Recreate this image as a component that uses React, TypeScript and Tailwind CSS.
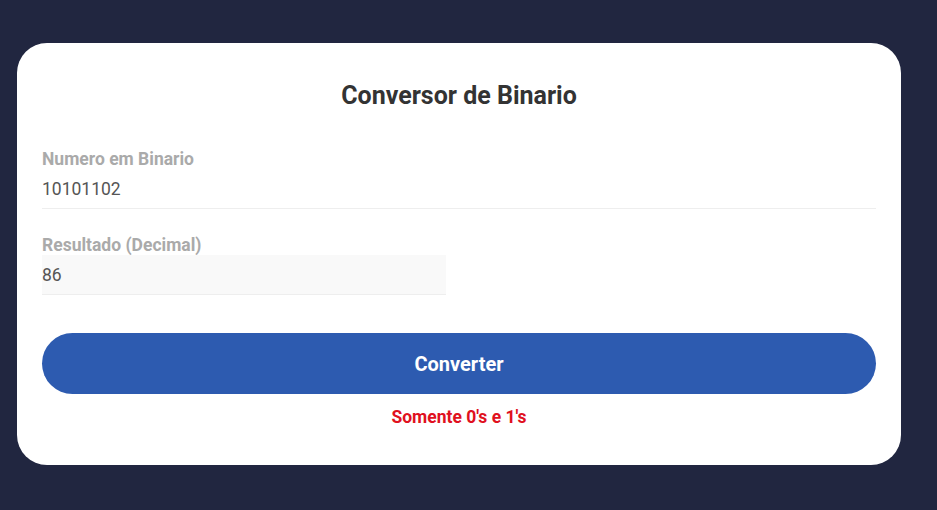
import * as React from "react";

const App = () => {
  const [binary, setBinary] = React.useState("10101102");

  return (
    <div
      className="min-h-[510px] w-full bg-[#212640] pt-[43px] pl-[17px]"
      style={{ fontFamily: "Roboto, 'Liberation Sans', sans-serif" }}
    >
      <div className="w-[884px] h-[422px] rounded-[30px] bg-white px-[25px] pt-[37px]">
        <h1 className="text-center text-[25px] leading-[32px] font-bold text-[#333333]">
          Conversor de Binario
        </h1>

        <div className="mt-[38px] flex flex-col">
          <label className="text-[17.5px] leading-[19px] font-bold text-[#aaaaaa]">
            Numero em Binario
          </label>
          <input
            className="h-[40px] w-full border-b border-[#eeeeee] bg-transparent text-[17.5px] text-[#555555] outline-none"
            value={binary}
            onChange={(e) => setBinary(e.target.value)}
          />
        </div>

        <div className="mt-[27px] flex flex-col">
          <label className="text-[17.5px] leading-[19px] font-bold text-[#aaaaaa]">
            Resultado (Decimal)
          </label>
          <input
            className="h-[40px] w-[404px] border-b border-[#eeeeee] bg-[#f9f9f9] text-[17.5px] text-[#555555] outline-none"
            value="86"
            readOnly
          />
        </div>

        <button className="mt-[38px] h-[61px] w-full rounded-full bg-[#2d5bb0] text-[20px] font-bold text-white">
          Converter
        </button>

        <p className="mt-[14px] text-center text-[17.5px] leading-[19px] font-bold text-[#e01020]">
          Somente 0's e 1's
        </p>
      </div>
    </div>
  );
};

export default App;
